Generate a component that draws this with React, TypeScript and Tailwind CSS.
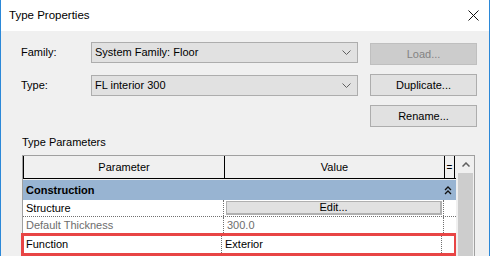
import React from "react";

const font = "font-['Liberation_Sans',Arial,sans-serif]";

const Chevron = () => (
  <svg width="9" height="5" viewBox="0 0 9 5" className="shrink-0">
    <path d="M0.5 0.5 L4.5 4.5 L8.5 0.5" fill="none" stroke="#606060" strokeWidth="1" />
  </svg>
);

function Combo({ value }: { value: string }) {
  return (
    <div className="w-[267px] h-[21px] bg-[#e1e1e1] border border-[#adadad] flex items-center pl-[3px] pr-[6px]">
      <span className="flex-1 text-[11px] text-black">{value}</span>
      <Chevron />
    </div>
  );
}

function Btn({ label, disabled }: { label: string; disabled?: boolean }) {
  return (
    <div
      className={
        disabled
          ? "w-[107px] h-[22px] bg-[#cccccc] border border-[#bfbfbf] flex items-center justify-center text-[11px] text-[#838383]"
          : "w-[107px] h-[22px] bg-[#e1e1e1] border border-[#adadad] flex items-center justify-center text-[11px] text-black"
      }
    >
      {label}
    </div>
  );
}

const dotR = "border-r border-dotted border-[#707070]";
const dotB = "border-b border-dotted border-[#707070]";

export default function App() {
  return (
    <div className={`w-[490px] h-[256px] overflow-hidden flex flex-col border-x border-[#2b88d8] ${font}`}>
      {/* title bar */}
      <div className="h-[31px] bg-white flex items-center pl-[8px] pr-[10px] shrink-0">
        <span className="flex-1 text-[11.5px] text-black">Type Properties</span>
        <svg width="11" height="11" viewBox="0 0 11 11">
          <path d="M0.5 0.5 L10.5 10.5 M10.5 0.5 L0.5 10.5" stroke="#111" strokeWidth="1" />
        </svg>
      </div>

      {/* body */}
      <div className="flex-1 bg-[#f0f0f0] pt-[11px] pl-[20px] pr-[12px]">
        <div className="flex items-start h-[23px]">
          <span className="w-[70px] h-[21px] flex items-center text-[11px]">Family:</span>
          <Combo value="System Family: Floor" />
          <div className="ml-[12px] mt-[1px]">
            <Btn label="Load..." disabled />
          </div>
        </div>
        <div className="flex items-start mt-[9px] h-[22px]">
          <span className="w-[70px] h-[21px] flex items-center text-[11px] mt-[1px]">Type:</span>
          <div className="mt-[1px]">
            <Combo value="FL interior 300" />
          </div>
          <div className="ml-[12px]">
            <Btn label="Duplicate..." />
          </div>
        </div>
        <div className="flex justify-end mt-[9px]">
          <Btn label="Rename..." />
        </div>

        <div className="text-[11px] mt-[8px] ml-[1px] leading-[14px]">Type Parameters</div>

        {/* table */}
        <div className="mt-[6px] ml-[1px] w-[453px] border-t border-l border-[#a0a0a0] flex text-[11px]">
          <div className="w-[433px] flex flex-col">
            {/* header */}
            <div className="h-[23px] flex bg-[#f0f0f0] border-b border-l border-black">
              <div className="w-[201px] border-r border-black flex items-center justify-center">Parameter</div>
              <div className="w-[220px] border-r border-black flex items-center justify-center">Value</div>
              <div className="w-[10px] border-r border-black flex items-center justify-center text-[10px]">=</div>
            </div>
            {/* group */}
            <div className="h-[20px] mt-[1px] bg-[#98b4d2] flex items-center">
              <span className="flex-1 pl-[3px] font-bold">Construction</span>
              <svg width="8" height="9" viewBox="0 0 8 9" className="mr-[4px]">
                <path d="M1 4 L4 1 L7 4 M1 8 L4 5 L7 8" fill="none" stroke="#111" strokeWidth="1.3" />
              </svg>
            </div>
            {/* rows */}
            <div className={`h-[17px] bg-white flex ${dotB}`}>
              <div className={`w-[201px] pl-[3px] flex items-center ${dotR}`}>Structure</div>
              <div className={`w-[220px] ${dotR} pl-[2px] py-[1px]`}>
                <div className="h-full w-[216px] bg-[#e1e1e1] border border-[#b0b0b0] border-r-2 border-b-2 flex items-center justify-center">
                  Edit...
                </div>
              </div>
              <div className="w-[10px]" />
            </div>
            <div className="h-[16px] bg-white flex">
              <div className={`w-[201px] pl-[3px] flex items-center text-[#6d6d6d] ${dotR}`}>Default Thickness</div>
              <div className={`w-[220px] pl-[3px] flex items-center text-[#6d6d6d] ${dotR}`}>300.0</div>
              <div className="w-[10px]" />
            </div>
            <div className="h-[23px] bg-white flex border-[3px] border-[#e84545] -ml-[2px] w-[436px]">
              <div className={`w-[198px] pl-[2px] flex items-center ${dotR}`}>Function</div>
              <div className={`w-[220px] pl-[3px] flex items-center ${dotR}`}>Exterior</div>
              <div className="w-[10px]" />
            </div>
          </div>
          {/* scrollbar */}
          <div className="w-[19px] flex flex-col border-r border-[#a0a0a0] pl-[2px] pr-[1px] bg-[#f0f0f0]">
            <div className="h-[17px] flex items-center justify-center">
              <svg width="8" height="5" viewBox="0 0 8 5">
                <path d="M0.5 4.5 L4 1 L7.5 4.5" fill="none" stroke="#606060" strokeWidth="1.5" />
              </svg>
            </div>
            <div className="flex-1 bg-[#cdcdcd]" />
          </div>
        </div>
      </div>
    </div>
  );
}
